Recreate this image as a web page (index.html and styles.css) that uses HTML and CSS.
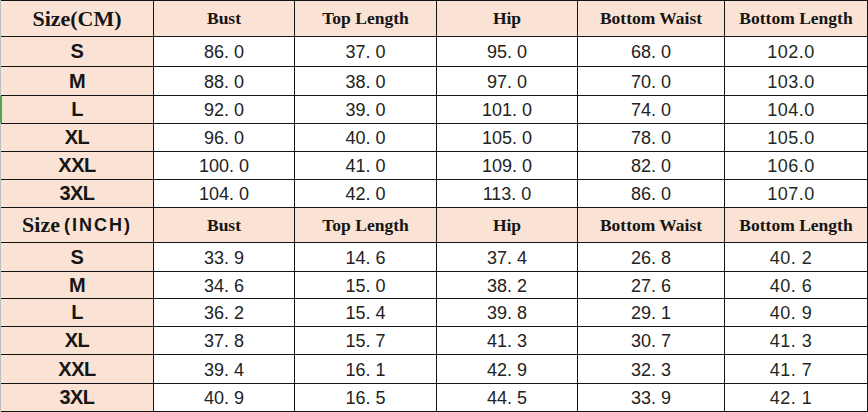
FILE: index.html
```html
<!DOCTYPE html>
<html lang="en">
<head>
<meta charset="utf-8">
<title>Size Chart</title>
<link rel="stylesheet" href="styles.css">
</head>
<body>
<div class="sheet">
  <div class="cell head size-head">Size(CM)</div>
  <div class="cell head">Bust</div>
  <div class="cell head">Top Length</div>
  <div class="cell head">Hip</div>
  <div class="cell head">Bottom Waist</div>
  <div class="cell head">Bottom Length</div>

  <div class="cell label">S</div>
  <div class="cell num">86. 0</div><div class="cell num">37. 0</div><div class="cell num">95. 0</div><div class="cell num">68. 0</div><div class="cell num last">102.0</div>
  <div class="cell label">M</div>
  <div class="cell num">88. 0</div><div class="cell num">38. 0</div><div class="cell num">97. 0</div><div class="cell num">70. 0</div><div class="cell num last">103.0</div>
  <div class="cell label picked">L</div>
  <div class="cell num">92. 0</div><div class="cell num">39. 0</div><div class="cell num">101. 0</div><div class="cell num">74. 0</div><div class="cell num last">104.0</div>
  <div class="cell label">XL</div>
  <div class="cell num">96. 0</div><div class="cell num">40. 0</div><div class="cell num">105. 0</div><div class="cell num">78. 0</div><div class="cell num last">105.0</div>
  <div class="cell label">XXL</div>
  <div class="cell num">100. 0</div><div class="cell num">41. 0</div><div class="cell num">109. 0</div><div class="cell num">82. 0</div><div class="cell num last">106.0</div>
  <div class="cell label">3XL</div>
  <div class="cell num">104. 0</div><div class="cell num">42. 0</div><div class="cell num">113. 0</div><div class="cell num">86. 0</div><div class="cell num last">107.0</div>

  <div class="cell head size-head">Size<span class="inch">(INCH)</span></div>
  <div class="cell head">Bust</div>
  <div class="cell head">Top Length</div>
  <div class="cell head">Hip</div>
  <div class="cell head">Bottom Waist</div>
  <div class="cell head">Bottom Length</div>

  <div class="cell label">S</div>
  <div class="cell num">33. 9</div><div class="cell num">14. 6</div><div class="cell num">37. 4</div><div class="cell num">26. 8</div><div class="cell num last">40. 2</div>
  <div class="cell label">M</div>
  <div class="cell num">34. 6</div><div class="cell num">15. 0</div><div class="cell num">38. 2</div><div class="cell num">27. 6</div><div class="cell num last">40. 6</div>
  <div class="cell label">L</div>
  <div class="cell num">36. 2</div><div class="cell num">15. 4</div><div class="cell num">39. 8</div><div class="cell num">29. 1</div><div class="cell num last">40. 9</div>
  <div class="cell label">XL</div>
  <div class="cell num">37. 8</div><div class="cell num">15. 7</div><div class="cell num">41. 3</div><div class="cell num">30. 7</div><div class="cell num last">41. 3</div>
  <div class="cell label">XXL</div>
  <div class="cell num">39. 4</div><div class="cell num">16. 1</div><div class="cell num">42. 9</div><div class="cell num">32. 3</div><div class="cell num last">41. 7</div>
  <div class="cell label">3XL</div>
  <div class="cell num">40. 9</div><div class="cell num">16. 5</div><div class="cell num">44. 5</div><div class="cell num">33. 9</div><div class="cell num last">42. 1</div>
</div>
</body>
</html>
```

FILE: styles.css
```css
html, body {
  margin: 0;
  padding: 0;
  background: #ffffff;
}

.sheet {
  display: grid;
  width: 868px;
  height: 412px;
  box-sizing: border-box;
  grid-template-columns: 152px 140px 141px 140px 146px 142px;
  grid-template-rows: 35px 29px 28px 27px 27px 27px 27px 34px 28px 26px 27px 27px 28px 27px;
  gap: 1px;
  padding: 1px 1px 1px 0;
  border-left: 1px solid #bdbdbd;
  background: #141414;
}

.cell {
  display: flex;
  align-items: center;
  justify-content: center;
  background: #ffffff;
  overflow: hidden;
  white-space: pre;
}

.head {
  background: #fae3d5;
  font-family: "Liberation Serif", "Times New Roman", serif;
  font-weight: bold;
  font-size: 17.5px;
  color: #151515;
}

.size-head {
  font-size: 22px;
}

.inch {
  font-family: "Liberation Sans", Arial, sans-serif;
  font-weight: bold;
  font-size: 18px;
  letter-spacing: 2px;
  margin-left: 4px;
}

.label {
  background: #fae3d5;
  font-family: "Liberation Sans", Arial, sans-serif;
  font-weight: bold;
  font-size: 20px;
  color: #161616;
  letter-spacing: -0.5px;
}

.picked {
  box-shadow: -1px 0 0 #52a35a, inset 1px 0 0 #52a35a;
}

.num {
  font-family: "Liberation Sans", Arial, sans-serif;
  font-size: 18px;
  color: #222222;
  padding-top: 2px;
}

.last {
  color: #1d2a22;
  letter-spacing: 0.5px;
  padding-right: 10px;
}
```
